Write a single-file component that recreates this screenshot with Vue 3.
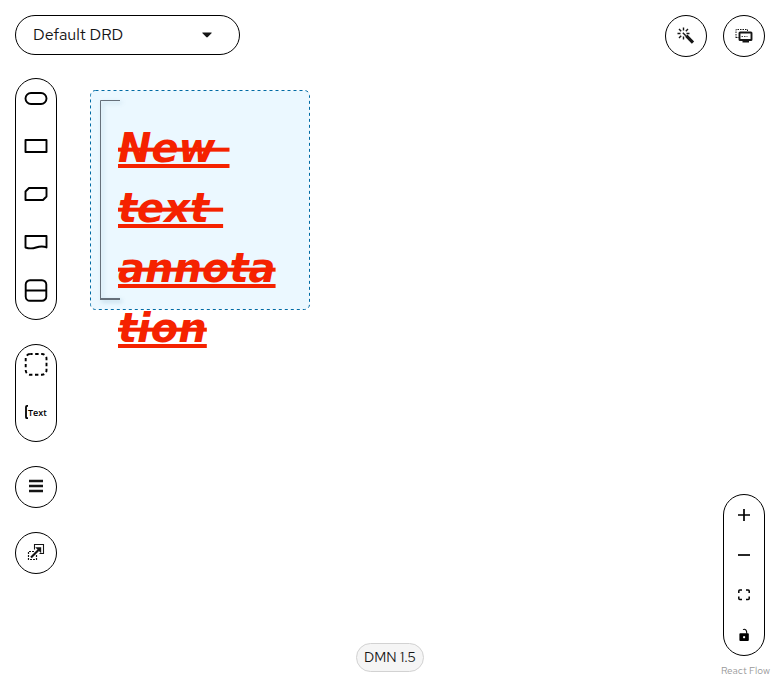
<script setup>
import { ref } from 'vue'

const drd = ref('Default DRD')
const lines = ['New ', 'text ', 'annota', 'tion']

const nodeTools = [
  { label: 'Input Data', d: 'M7 7h10a5.5 5.5 0 0 1 0 11h-10a5.5 5.5 0 0 1 0-11z' },
  { label: 'Decision', d: 'M1.5 6h21v12h-21z' },
  { label: 'Business Knowledge Model', d: 'M5 6h17.5v8.5l-3.5 3.5h-17.5v-8.5z' },
  { label: 'Knowledge Source', d: 'M1.5 6h21v11.5c-4-2-7-1.2-10.5 0s-7 1.2-10.5 0z' },
  { label: 'Decision Service', d: 'M6 2.2h12a4.3 4.3 0 0 1 4.3 4.3v12a4.3 4.3 0 0 1-4.3 4.3h-12a4.3 4.3 0 0 1-4.3-4.3v-12a4.3 4.3 0 0 1 4.3-4.3zM1.7 12.5h20.6' },
]
</script>

<template>
  <main class="editor">
    <header class="top">
      <label class="drd">
        <select v-model="drd" aria-label="Selected DRD">
          <option>Default DRD</option>
        </select>
        <svg class="caret" width="10" height="6" viewBox="0 0 10 6"><path d="M0.8 0.5h8.4q1 0 .3 .8l-3.7 3.7q-.8 .8-1.6 0l-3.7-3.7q-.7-.8 .3-.8z" fill="#151515" /></svg>
      </label>
      <div class="actions">
        <button class="round" aria-label="Autolayout">
          <svg width="18" height="18" viewBox="0 0 18 18" fill="none" stroke="#151515">
            <path d="M9.2 8.6l6.8 7" stroke-width="3.2" />
            <path d="M6.5 .5v3M.5 6.5h3M2 2l2.2 2.2M11 2l-2.2 2.2M9.5 6.5h3M2 11l2.2-2.2M6.5 9.5v3M5.8 5.8l3 3" stroke-width="1.4" />
          </svg>
        </button>
        <button class="round" aria-label="Overlays">
          <svg width="18" height="18" viewBox="0 0 18 18" fill="none" stroke="#151515">
            <path d="M1 11V2.5h11" stroke-width="1" stroke-dasharray="1.5 1" />
            <path d="M1 10.5h3M12.5 2.5v3" stroke-width="1" stroke-dasharray="1.5 1" />
            <rect x="4.5" y="5.5" width="12" height="7.5" rx="0.6" stroke-width="1.9" />
            <path d="M6.5 9.5h6" stroke-width=".8" stroke-dasharray="1.5 1" />
            <path d="M10.5 13v2M7.5 14.8h6.5" stroke-width="1.5" />
          </svg>
        </button>
      </div>
    </header>

    <div class="workspace">
      <nav class="palette" aria-label="Palette">
        <div class="pill">
          <button v-for="tool in nodeTools" :key="tool.label" class="tool" :aria-label="tool.label">
            <svg width="24" height="24" viewBox="0 0 24 24" fill="none" stroke="#000" stroke-width="1.9" stroke-linejoin="round"><path :d="tool.d" /></svg>
          </button>
        </div>
        <div class="pill">
          <button class="tool" aria-label="Group">
            <svg width="24" height="24" viewBox="0 0 24 24" fill="none" stroke="#000" stroke-width="1.9">
              <rect x="1.7" y="2" width="20.8" height="20.8" rx="4.5" stroke-dasharray="3.4 2.6" stroke-dashoffset="1" />
            </svg>
          </button>
          <button class="tool" aria-label="Text Annotation">
            <svg width="24" height="24" viewBox="0 0 24 24">
              <path d="M4 5.9H3q-1 0-1 1v10.3q0 1 1 1H4" fill="none" stroke="#000" stroke-width="1.8" />
              <text x="4" y="16" class="icon-text">Text</text>
            </svg>
          </button>
        </div>
        <button class="round" aria-label="DRG Nodes">
          <svg width="14" height="16" viewBox="0 0 14 16" fill="#151515"><path d="M0 .8h14v2.4H0zM0 5.8h14v2.4H0zM0 10.8h14v2.4H0z" /></svg>
        </button>
        <button class="round" aria-label="External Nodes">
          <svg width="18" height="18" viewBox="0 0 18 18" fill="none" stroke="#151515">
            <path d="M7.5 5.5v-5h9v9h-4" stroke-width="1.1" />
            <path d="M7 7.5H1.5v8h8V11" stroke-width="1.2" stroke-dasharray="2 1" />
            <path d="M4 13.5L11.5 6" stroke-width="2.2" />
            <path d="M8.2 3.3h6v6z" fill="#151515" stroke="none" />
          </svg>
        </button>
      </nav>

      <span class="version">DMN 1.5</span>

      <div class="pill controls">
        <button class="control" aria-label="zoom in">
          <svg width="14" height="14" viewBox="0 0 14 14"><path d="M7 1v12M1 7h12" stroke="#000" stroke-width="1.7" /></svg>
        </button>
        <button class="control" aria-label="zoom out">
          <svg width="14" height="14" viewBox="0 0 14 14"><path d="M1 7h12" stroke="#000" stroke-width="1.7" /></svg>
        </button>
        <button class="control" aria-label="fit view">
          <svg width="14" height="14" viewBox="0 0 14 14" fill="none" stroke="#000" stroke-width="1.5"><path d="M1.8 5V3q0-1 1-1H5M9 2h2.2q1 0 1 1v2M12.2 8.5v2q0 1-1 1H9M5 11.5H2.8q-1 0-1-1V8.5" /></svg>
        </button>
        <button class="control" aria-label="toggle interactivity">
          <svg width="14" height="14" viewBox="0 0 14 14">
            <path d="M6 1.6q1.5-.9 2.8 .2q1.2 1.2 .9 4" fill="none" stroke="#000" stroke-width="1.1" />
            <path d="M3.3 5.2h7.6q.9 0 .9 .9v6q0 .9-.9 .9H3.3q-.9 0-.9-.9v-6q0-.9 .9-.9zM7.1 8a1.1 1.1 0 1 0 .01 0z" fill="#000" fill-rule="evenodd" />
          </svg>
        </button>
      </div>
    </div>

    <section class="node" aria-label="Text annotation">
      <svg width="220" height="220" viewBox="0 0 220 220">
        <rect class="selection" x="0.5" y="0.5" width="219" height="219" rx="5" />
        <g class="bracket">
          <path d="M30 10.5H10.5V209" />
          <path class="foot" d="M10 209H30" />
        </g>
        <text class="node-text" x="28"><tspan v-for="(line, i) in lines" :key="line" x="28" :y="72 + i * 60">{{ line }}</tspan></text>
      </svg>
    </section>

    <a class="attribution" href="https://reactflow.dev">React Flow</a>
  </main>
</template>

<style>
body {
  margin: 0;
  background: #fff;
}
</style>

<style scoped>
.editor {
  position: relative;
  box-sizing: border-box;
  min-height: 100vh;
  padding: 15px 15px 8px;
  display: flex;
  flex-direction: column;
  gap: 21px;
  overflow: hidden;
  font-family: "Red Hat Text", Lato, "Noto Sans", sans-serif;
  color: #151515;
}
.top {
  display: flex;
  justify-content: space-between;
  align-items: flex-start;
}
.drd {
  display: grid;
  align-items: center;
}
.drd select {
  grid-area: 1 / 1;
  appearance: none;
  width: 225px;
  height: 40px;
  padding: 0 17px 2px;
  border: 1px solid #000;
  border-radius: 20px;
  background: #fff;
  color: inherit;
  font: 16px "Red Hat Text", "Noto Sans", sans-serif;
}
.caret {
  grid-area: 1 / 1;
  justify-self: end;
  margin-right: 28px;
  pointer-events: none;
}
.actions {
  display: flex;
  gap: 16px;
}
button {
  padding: 0;
  border: 0;
  background: none;
  display: flex;
  align-items: center;
  justify-content: center;
}
.round {
  box-sizing: border-box;
  width: 42px;
  height: 42px;
  border: 1px solid #000;
  border-radius: 50%;
  background: #fff;
}
.workspace {
  flex: 1;
  display: grid;
  grid-template-columns: auto 1fr auto;
}
.palette {
  display: flex;
  flex-direction: column;
  gap: 24px;
}
.pill {
  box-sizing: border-box;
  width: 42px;
  border: 1px solid #000;
  border-radius: 21px;
  background: #fff;
}
.tool {
  width: 100%;
  height: 38px;
  margin-bottom: 10px;
}
.icon-text {
  font: 600 9px "Open Sans", "Noto Sans", sans-serif;
}
.version {
  align-self: end;
  justify-self: center;
  padding: 0 7px;
  border: 1px solid #d2d2d2;
  border-radius: 15px;
  background: #f5f5f5;
  font-size: 14px;
  line-height: 27px;
}
.controls {
  align-self: end;
  margin-bottom: 16px;
}
.control {
  width: 100%;
  height: 40px;
}
.node {
  position: absolute;
  left: 90px;
  top: 90px;
}
.node svg {
  display: block;
  overflow: visible;
}
.selection {
  fill: #ebf8ff;
  stroke: #006ba4;
  stroke-dasharray: 3 3;
}
.bracket {
  fill: none;
  stroke: #66707a;
  stroke-width: 1;
  filter: drop-shadow(2px 2px 2px rgba(0, 80, 120, 0.25));
}
.foot {
  stroke-width: 2;
}
.node-text {
  font: italic bold 40px "DejaVu Sans", sans-serif;
  fill: #f52200;
  white-space: pre;
  text-decoration: underline line-through;
  text-decoration-thickness: 3px;
}
.attribution {
  position: absolute;
  right: 10px;
  bottom: 3px;
  font: 10px/12px "Red Hat Text", "Noto Sans", sans-serif;
  color: #999;
  text-decoration: none;
}
</style>
